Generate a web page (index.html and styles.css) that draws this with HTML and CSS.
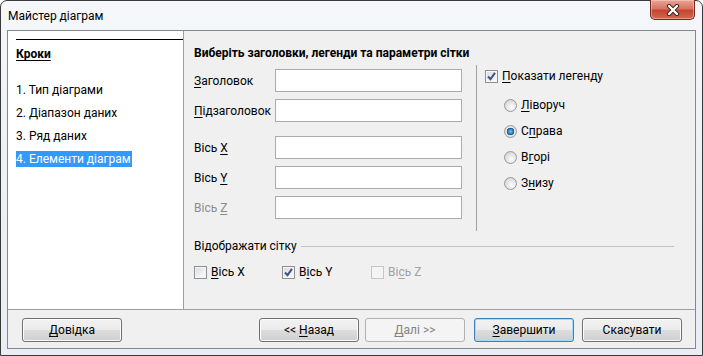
FILE: index.html
```html
<!DOCTYPE html>
<html lang="uk">
<head>
    <meta charset="UTF-8">
    <title>Майстер діаграм</title>
    <link rel="stylesheet" href="styles.css">
</head>
<body>
    <div class="window">
        <div class="titlebar">
            <span class="title">Майстер діаграм</span>
            <span class="close">
                <svg width="14" height="12" viewBox="0 0 14 12">
                    <path d="M3 2 L11 10 M11 2 L3 10" stroke="#3a2220" stroke-width="4.2" stroke-linecap="round" fill="none"/>
                    <path d="M3 2 L11 10 M11 2 L3 10" stroke="#ffffff" stroke-width="2.4" stroke-linecap="round" fill="none"/>
                </svg>
            </span>
        </div>

        <div class="client">
            <div class="main">
                <!-- steps pane -->
                <div class="steps">
                    <div class="steps-rule"></div>
                    <div class="steps-head">Кроки</div>
                    <ul class="steps-list">
                        <li>1. Тип діаграми</li>
                        <li>2. Діапазон даних</li>
                        <li>3. Ряд даних</li>
                        <li><span class="current">4. Елементи діаграм</span></li>
                    </ul>
                </div>

                <!-- page -->
                <div class="page">
                    <div class="page-title">Виберіть заголовки, легенди та параметри сітки</div>
                    <div class="page-body">
                        <div class="fields">
                            <div class="field"><label><u>З</u>аголовок</label><span class="edit"></span></div>
                            <div class="field"><label><u>П</u>ідзаголовок</label><span class="edit"></span></div>
                            <div class="field spaced"><label>Вісь <u>X</u></label><span class="edit"></span></div>
                            <div class="field"><label>Вісь <u>Y</u></label><span class="edit"></span></div>
                            <div class="field disabled"><label>Вісь <u>Z</u></label><span class="edit"></span></div>
                        </div>
                        <div class="legend">
                            <div class="check legend-check">
                                <span class="box checked">
                                    <svg width="11" height="11" viewBox="0 0 11 11"><path d="M2 5.5 L4.5 8.2 L9 1.8" stroke="#3d5488" stroke-width="2" fill="none"/></svg>
                                </span>
                                <span><u>П</u>оказати легенду</span>
                            </div>
                            <div class="radios">
                                <div class="check"><span class="radio"></span><span><u>Л</u>іворуч</span></div>
                                <div class="check"><span class="radio on"></span><span>С<u>п</u>рава</span></div>
                                <div class="check"><span class="radio"></span><span>В<u>г</u>орі</span></div>
                                <div class="check"><span class="radio"></span><span>З<u>н</u>изу</span></div>
                            </div>
                        </div>
                    </div>

                    <div class="grid-group">
                        <div class="group-head"><span>Відображати сітку</span><span class="group-line"></span></div>
                        <div class="grid-checks">
                            <div class="check grid-x"><span class="box"></span><span><u>В</u>ісь X</span></div>
                            <div class="check grid-y">
                                <span class="box checked">
                                    <svg width="11" height="11" viewBox="0 0 11 11"><path d="M2 5.5 L4.5 8.2 L9 1.8" stroke="#3d5488" stroke-width="2" fill="none"/></svg>
                                </span>
                                <span>В<u>і</u>сь Y</span>
                            </div>
                            <div class="check disabled"><span class="box"></span><span>Ві<u>с</u>ь Z</span></div>
                        </div>
                    </div>
                </div>
            </div>

            <div class="footer">
                <button class="btn" type="button"><u>Д</u>овідка</button>
                <div class="nav">
                    <button class="btn" type="button">&lt;&lt; <u>Н</u>азад</button>
                    <button class="btn disabled" type="button"><u>Д</u>алі &gt;&gt;</button>
                    <button class="btn default" type="button"><u>З</u>авершити</button>
                    <button class="btn" type="button">Скасувати</button>
                </div>
            </div>
        </div>
    </div>
</body>
</html>
```

FILE: styles.css
```css
* {
    box-sizing: border-box;
}

body {
    margin: 0;
    width: 703px;
    height: 356px;
    overflow: hidden;
    background: #ffffff;
    color: #000000;
    font-family: Roboto, "Noto Sans", sans-serif;
    font-size: 12px;
}

u {
    text-decoration: underline;
    text-underline-offset: 2px;
}

.window {
    height: 356px;
    display: flex;
    flex-direction: column;
    border: 1px solid #3a3a3a;
    border-radius: 7px 7px 0 0;
    background: linear-gradient(180deg, #f5f7fa 0%, #eef1f5 40%, #e8eef4 100%);
}

/* title bar */

.titlebar {
    height: 29px;
    flex-shrink: 0;
    display: flex;
    justify-content: space-between;
    align-items: flex-start;
    padding-left: 7px;
}

.title {
    margin-top: 7px;
    line-height: 16px;
    text-shadow: 0 0 6px #ffffff;
}

.close {
    width: 45px;
    height: 20px;
    margin-top: -1px;
    margin-right: 7px;
    display: flex;
    align-items: center;
    justify-content: center;
    border: 1px solid #6e2a22;
    border-top: none;
    border-radius: 0 0 5px 5px;
    background: linear-gradient(180deg, #e9a596 0%, #d9735f 45%, #c44530 55%, #d06a4f 100%);
    box-shadow: inset 0 0 0 1px rgba(255, 220, 210, 0.45);
}

/* client area */

.client {
    flex: 1;
    margin: 0 6px 6px 6px;
    display: flex;
    flex-direction: column;
    border: 1px solid #828790;
    background: #f0f0f0;
}

.main {
    height: 279px;
    display: flex;
    border-bottom: 1px solid #a0a0a0;
}

.steps {
    width: 176px;
    padding-left: 8px;
    background: #ffffff;
    border-right: 1px solid #a0a0a0;
}

.steps-rule {
    margin-top: 8px;
    height: 1px;
    background: #000000;
}

.steps-head {
    margin-top: 6px;
    line-height: 16px;
    font-weight: bold;
    text-decoration: underline;
    text-underline-offset: 2px;
}

.steps-list {
    list-style: none;
    margin: 20px 0 0 0;
    padding: 0;
}

.steps-list li {
    height: 16px;
    line-height: 16px;
    margin-bottom: 7px;
}

.steps-list .current {
    display: inline-block;
    padding-right: 1px;
    background: #3399ff;
    color: #ffffff;
}

/* page */

.page {
    flex: 1;
    display: flex;
    flex-direction: column;
    padding: 14px 0 0 10px;
}

.page-title {
    line-height: 16px;
    font-weight: bold;
}

.page-body {
    height: 166px;
    margin-top: 4px;
    display: flex;
}

.fields {
    width: 282px;
    padding-top: 4px;
}

.field {
    height: 23px;
    margin-bottom: 7px;
    display: flex;
    align-items: center;
}

.field.spaced {
    margin-top: 14px;
}

.field label {
    width: 81px;
}

.field.disabled label {
    color: #8d8d8d;
}

.edit {
    width: 187px;
    height: 23px;
    background: #ffffff;
    border: 1px solid #ababab;
}

.legend {
    flex: 1;
    padding-left: 8px;
    border-left: 1px solid #a0a0a0;
}

.legend-check {
    margin-top: 3px;
}

.radios {
    margin: 13px 0 0 19px;
}

.radios .check {
    margin-bottom: 10px;
}

/* checkboxes and radios */

.check {
    height: 16px;
    display: flex;
    align-items: center;
}

.box {
    width: 13px;
    height: 13px;
    margin-right: 4px;
    flex-shrink: 0;
    display: flex;
    align-items: center;
    justify-content: center;
    border: 1px solid #8e8f8f;
    background: linear-gradient(135deg, #d6d9de 0%, #f0f1f3 60%, #fbfbfb 100%);
    box-shadow: inset 0 0 0 1px #f6f6f6;
}

.check.disabled {
    color: #a2a2a2;
}

.check.disabled .box {
    border-color: #c6c6c6;
    background: #f4f4f4;
    box-shadow: none;
}

.radio {
    width: 13px;
    height: 13px;
    margin-right: 4px;
    flex-shrink: 0;
    border-radius: 50%;
    border: 1px solid #9a9a9a;
    background: radial-gradient(circle at 60% 65%, #fdfdfd 0%, #e6e6e6 45%, #c9cbcf 100%);
}

.radio.on {
    background: radial-gradient(circle at 50% 50%, #7cc3f2 0%, #2f83c9 30%, #1a4f80 45%, #e8e8e8 52%, #cfd1d4 100%);
}

/* grid group */

.grid-group {
    margin: 7px 21px 0 0;
}

.group-head {
    display: flex;
    align-items: center;
    line-height: 16px;
}

.group-line {
    flex: 1;
    height: 1px;
    margin-left: 4px;
    background: #c2c2c2;
}

.grid-checks {
    display: flex;
    margin-top: 10px;
}

.grid-x {
    width: 88px;
}

.grid-y {
    width: 89px;
}

/* footer */

.footer {
    flex: 1;
    display: flex;
    justify-content: space-between;
    padding: 8px 13px 0 14px;
}

.nav {
    display: flex;
}

.btn {
    width: 100px;
    height: 24px;
    padding: 0;
    font: inherit;
    color: #000000;
    border: 1px solid #707070;
    border-radius: 3px;
    background: linear-gradient(180deg, #f2f2f2 0%, #ebebeb 50%, #dddddd 51%, #cfcfcf 100%);
    box-shadow: inset 0 0 0 1px #fbfbfb;
}

.nav .btn + .btn {
    margin-left: 6px;
}

.nav .btn.default {
    margin-left: 9px;
    border-color: #3c7fb1;
    box-shadow: inset 0 0 0 1px #a7dcf5;
}

.nav .btn.default + .btn {
    margin-left: 8px;
}

.btn.disabled {
    color: #838383;
    border-color: #adb2b5;
    background: #f4f4f4;
    box-shadow: none;
}
```
